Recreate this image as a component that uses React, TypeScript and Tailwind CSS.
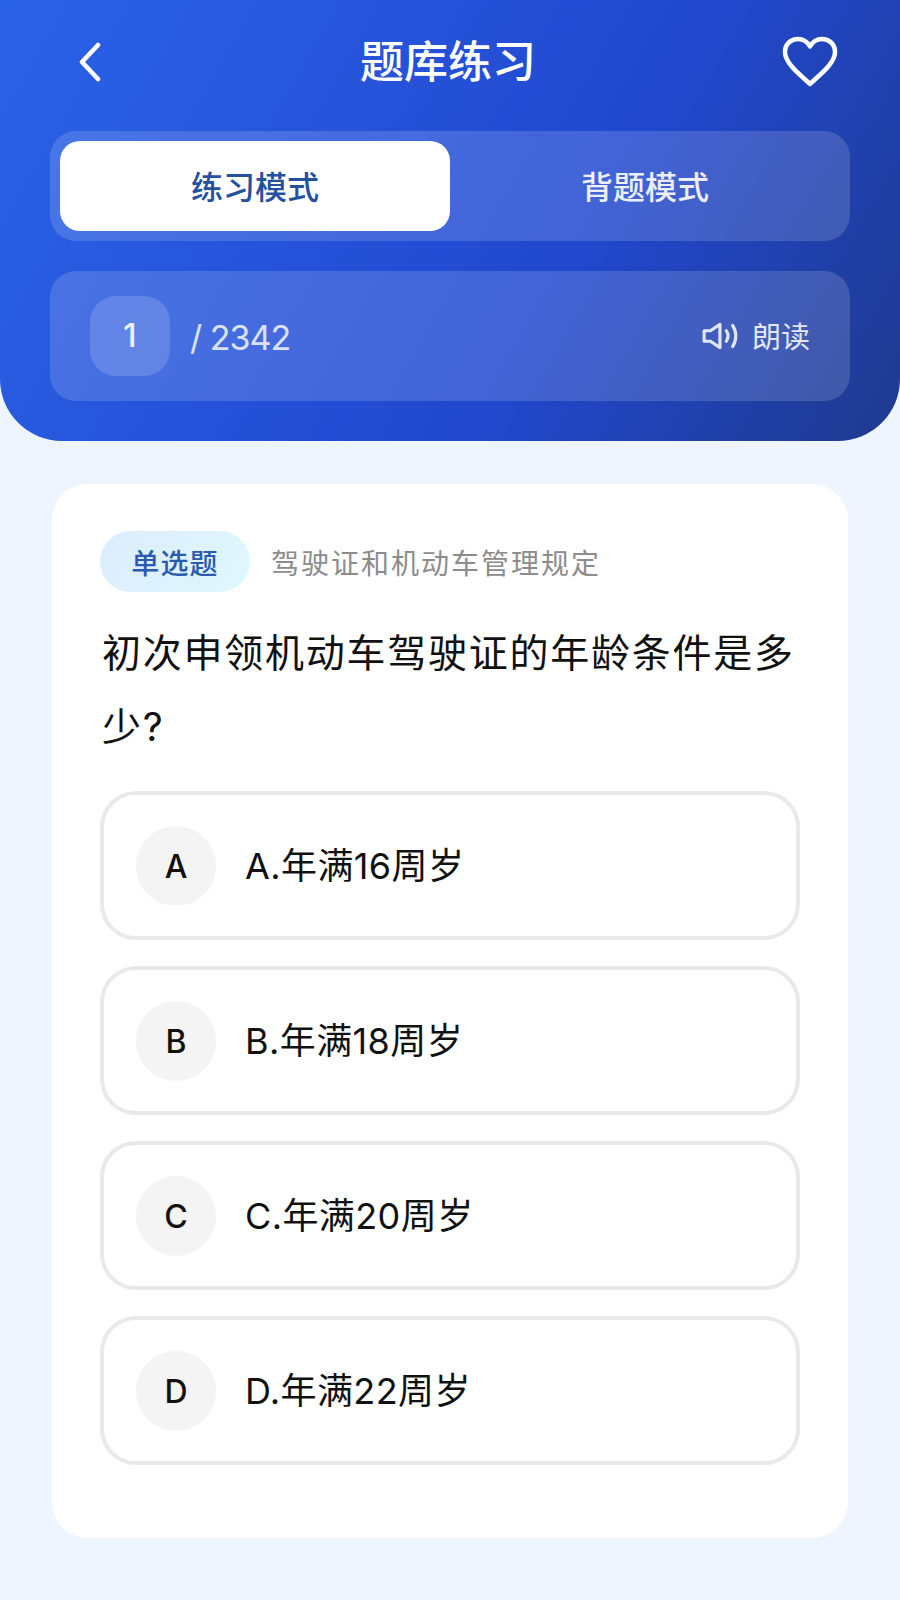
const OPTIONS = [
  { key: "A", text: "A.年满16周岁" },
  { key: "B", text: "B.年满18周岁" },
  { key: "C", text: "C.年满20周岁" },
  { key: "D", text: "D.年满22周岁" },
];

export default function App() {
  return (
    <div className="w-[900px] h-[1600px] overflow-hidden bg-[#eef5fe] font-['Inter','Noto_Sans_CJK_SC',sans-serif]">
      {/* Header */}
      <div className="h-[441px] rounded-b-[62px] bg-[linear-gradient(120deg,#2b63e8_0%,#2148cf_62%,#1f3a8e_100%)] px-[50px] pt-[32px]">
        <div className="grid h-[60px] grid-cols-[282px_auto_1fr] items-center pl-[28px] pr-[12px]">
          <svg width="24" height="40" viewBox="0 0 24 40" fill="none" stroke="white" strokeWidth="4.5" strokeLinecap="round" strokeLinejoin="round">
            <path d="M20 3 L4 20 L20 37" />
          </svg>
          <h1 className="text-[44px] leading-[60px] font-medium text-white">题库练习</h1>
          <svg className="justify-self-end" width="56" height="52" viewBox="0 0 56 52" fill="none" stroke="white" strokeWidth="4.5" strokeLinejoin="round">
            <path d="M28 48 C20 40 3 28 3 16 C3 8 9 3 16 3 C21 3 25.500 6 28 10.500 C30.500 6 35 3 40 3 C47 3 53 8 53 16 C53 28 36 40 28 48 Z" />
          </svg>
        </div>

        {/* Mode tabs */}
        <div className="mt-[39px] flex h-[110px] rounded-[26px] bg-white/15 p-[10px]">
          <div className="flex w-[390px] items-center justify-center rounded-[20px] bg-white pt-[4px] text-[32px] font-medium text-[#24509f]">
            练习模式
          </div>
          <div className="flex flex-1 items-center justify-center pt-[4px] text-[32px] font-medium text-white/90">
            背题模式
          </div>
        </div>

        {/* Progress */}
        <div className="mt-[30px] flex h-[130px] items-center rounded-[26px] bg-white/15 pl-[40px] pr-[40px]">
          <div className="flex h-[80px] w-[80px] items-center justify-center rounded-[26px] bg-white/15 text-[32px] font-medium text-white/90">
            1
          </div>
          <span className="ml-[20px] pt-[2px] text-[34px] tracking-[-1px] text-white/80">/ 2342</span>
          <div className="ml-auto flex items-center gap-[12px] text-[29px] text-white/85">
            <svg width="38" height="30" viewBox="0 0 36 28" fill="none" stroke="currentColor" strokeWidth="3" strokeLinecap="round" strokeLinejoin="round">
              <path d="M2 9 H8 L17 3 V25 L8 19 H2 Z" />
              <path d="M23 9 C25 12 25 16 23 19" />
              <path d="M29 4 C33 10 33 18 29 24" />
            </svg>
            <span className="pt-[3px]">朗读</span>
          </div>
        </div>
      </div>

      {/* Question card */}
      <div className="mx-[52px] mt-[43px] h-[1054px] rounded-[36px] bg-white px-[48px] pt-[47px]">
        <div className="flex items-center">
          <span className="flex h-[61px] w-[150px] items-center justify-center rounded-full bg-[linear-gradient(120deg,#dcedfb,#dff7fe)] pt-[4px] text-[28px] tracking-[1.2px] font-medium text-[#2a5bb0]">
            单选题
          </span>
          <span className="ml-[21px] pt-[4px] text-[28px] tracking-[2px] text-[#8c8c8c]">驾驶证和机动车管理规定</span>
        </div>

        <p className="ml-[2px] mt-[24px] text-[39px] leading-[74px] tracking-[1.75px] text-[#111]">
          初次申领机动车驾驶证的年龄条件是多少?
        </p>

        <div className="mt-[27px] flex flex-col gap-[26px]">
          {OPTIONS.map((opt) => (
            <div
              key={opt.key}
              className="flex h-[149px] items-center rounded-[36px] border-[4px] border-[#e9e9e9] pl-[32px]"
            >
              <span className="flex h-[80px] w-[80px] items-center justify-center rounded-full bg-[#f4f4f4] pt-[2px] text-[32px] font-medium text-[#111]">
                {opt.key}
              </span>
              <span className="ml-[29px] pt-[1px] text-[36px] tracking-[0.4px] text-[#111]">{opt.text}</span>
            </div>
          ))}
        </div>
      </div>
    </div>
  );
}
